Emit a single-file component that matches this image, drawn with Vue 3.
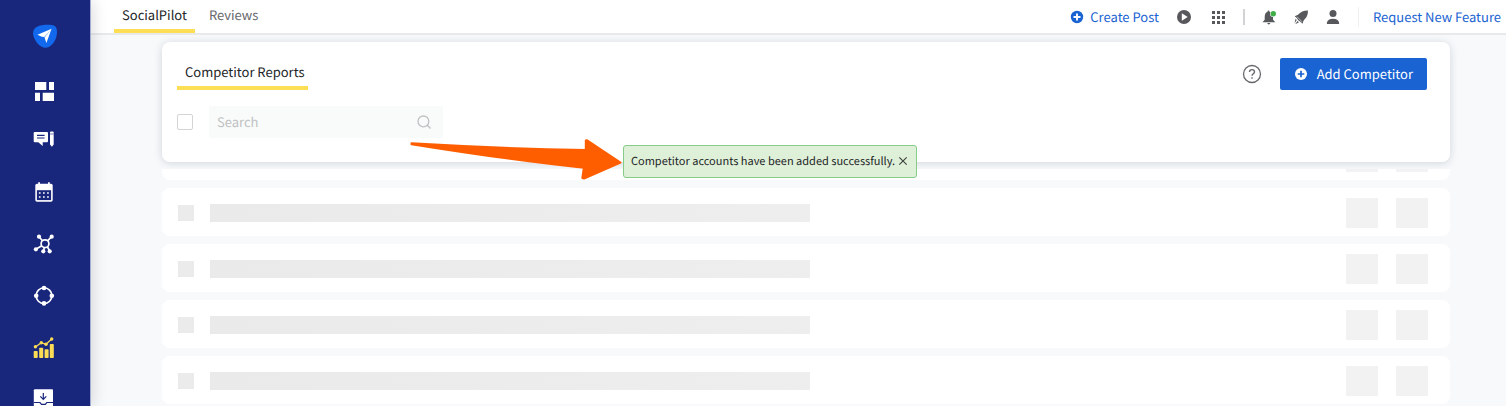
<script setup>
const rows = [1, 2, 3, 4, 5]
</script>

<template>
  <div class="app">
    <aside class="sidebar">
      <a href="#" class="brand" aria-label="Home">
        <svg viewBox="0 0 24 24"><path fill="#1269ed" d="M9 1.200C14 .5 19.800 .6 22 2.300C24.400 4 24.300 9 23.400 12.500C22 18.500 17 23.800 12.500 23.800C7 23.800 1 16.500 .1 10.500C-.3 5 3 1.900 9 1.200Z" /><path fill="#fff" d="M4.500 10.700 18.600 4.800 11.300 13 8.800 12.700ZM18.600 4.800 13.400 19 11.500 13.400Z" /></svg>
      </a>
      <nav class="menu" aria-label="Main">
        <a href="#" class="first" aria-label="Dashboard">
          <svg viewBox="0 0 24 24" fill="#fff"><path d="M2 3h11.300v8H2zM16 3h5v8h-5zM2 13.700h5V22H2zM9.700 13.700H21V22H9.700z" /></svg>
        </a>
        <a href="#" aria-label="Posts">
          <svg viewBox="0 0 24 24"><path fill="#fff" d="M1.700 4H14q1 0 1 1v8.300q0 1-1 1H9.700V18L5.300 14.300H1.700q-1 0-1-1V5q0-1 1-1ZM17 4.500q0-1 1-1h1.700q1 0 1 1v12l-1.800 2.300L17 16.500Z" /><path stroke="#18277c" stroke-width="1.200" d="M4 7.400h7.600M4 10h7.600" /><path stroke="#18277c" stroke-width=".6" d="M17 6h3.700" /></svg>
        </a>
        <a href="#" aria-label="Calendar">
          <svg viewBox="0 0 24 24"><path fill="#fff" d="M4 3.700h1.200V2.200h1.800v1.500h8V2.200h1.800v1.500H18q1.700 0 1.700 1.700V20q0 1.700-1.700 1.700H4Q2.300 21.700 2.300 20V5.400Q2.300 3.700 4 3.700Z" /><path fill="#18277c" d="M3.900 10.200h14.200v9.900H3.900z" /><path stroke="#fff" stroke-width="1.700" stroke-dasharray="1.700 2.400" d="M5.900 13h11M5.900 17h11" /></svg>
        </a>
        <a href="#" aria-label="Accounts">
          <svg viewBox="0 0 24 24" stroke="#fff" fill="none" stroke-width="1.700"><circle cx="12" cy="11.700" r="3.900" /><path d="M6 4.700l3.500 4M18.700 4.700l-4 4M2.700 17.300l6.200-3.600M10.700 19l.5-3.500M16.700 19l-2.200-4" /><g fill="#fff" stroke="none"><circle cx="6" cy="4.700" r="2.100" /><circle cx="18.700" cy="4.700" r="2.100" /><circle cx="2.900" cy="17.300" r="2.100" /><circle cx="10.300" cy="19.300" r="2.100" /><circle cx="16.700" cy="19.300" r="2.100" /></g></svg>
        </a>
        <a href="#" aria-label="Groups">
          <svg viewBox="0 0 24 24" fill="#fff"><circle cx="11" cy="11.700" r="7.900" fill="none" stroke="#fff" stroke-width="1.600" /><circle cx="11" cy="4" r="2.300" /><circle cx="11" cy="19.400" r="2.300" /><circle cx="3.200" cy="11.700" r="2.300" /><circle cx="18.800" cy="11.700" r="2.300" /></svg>
        </a>
        <a href="#" aria-label="Analytics" aria-current="page">
          <svg viewBox="0 0 24 24" fill="#fcdc55"><rect x=".7" y="15" width="4" height="7" rx=".8" /><rect x="6.200" y="11.700" width="4" height="10.300" rx=".8" /><rect x="11.600" y="13.300" width="4" height="8.700" rx=".8" /><rect x="16.800" y="8" width="4" height="14" rx=".8" /><path fill="none" stroke="#fcdc55" stroke-width="1.200" d="M2.400 11 8.300 6.700 13 8.200 18.700 3" /><circle cx="2.400" cy="10.800" r="1.700" /><circle cx="8.300" cy="6.700" r="1.700" /><circle cx="13" cy="8.300" r="1.700" /><circle cx="18.700" cy="3" r="1.700" /></svg>
        </a>
        <a href="#" aria-label="Inbox">
          <svg viewBox="0 0 24 24"><path fill="#fff" d="M2 1.300h17q1 0 1 1V20q0 1-1 1H2q-1.200 0-1.200-1V2.300q0-1 1.200-1Z" /><path fill="none" stroke="#18277c" stroke-width="1.200" d="M10.300 5v6M7.300 8.400l3 3 3-3M.8 14.500h6.200l1.500 1.800h3.800l1.500-1.800H20" /></svg>
        </a>
      </nav>
    </aside>

    <div class="page">
      <header class="topbar">
        <nav class="products" aria-label="Products">
          <a href="#" class="active">SocialPilot</a>
          <a href="#">Reviews</a>
        </nav>
        <div class="tools">
          <a href="#" class="create">
            <svg viewBox="0 0 14 14"><circle cx="7" cy="7" r="6.200" fill="#1a63d2" /><path stroke="#fff" stroke-width="1.900" d="M7 3.500v7M3.500 7h7" /></svg>
            Create Post
          </a>
          <div class="group">
            <button type="button" aria-label="Tutorials"><svg viewBox="0 0 16 16"><circle cx="8" cy="8" r="7" fill="#56585c" /><path fill="#fff" d="M5.800 4.200 11.700 8 5.800 11.800Z" /></svg></button>
            <button type="button" aria-label="Apps"><svg viewBox="0 0 16 16" fill="#56585c"><path d="M2 2h3v3H2zM7 2h3v3H7zM12 2h3v3h-3zM2 7h3v3H2zM7 7h3v3H7zM12 7h3v3h-3zM2 12h3v3H2zM7 12h3v3H7zM12 12h3v3h-3z" /></svg></button>
          </div>
          <div class="group account">
            <button type="button" aria-label="Notifications"><svg viewBox="0 0 16 16"><path fill="#56585c" d="M7.500 1.500q1 0 1 1.200Q12 4 12 8v2.700l2.300 2.600H1.500L3.700 10.700V8Q3.700 3.800 6.500 2.700 6.500 1.500 7.500 1.500ZM6.200 14.100h3.200q-.5 1.300-1.600 1.300t-1.600-1.300Z" /><circle cx="12.200" cy="4.700" r="3.200" fill="#fff" /><circle cx="12.300" cy="4.700" r="2.700" fill="#3fae49" /></svg></button>
            <button type="button" aria-label="What's new"><svg viewBox="0 0 16 16"><path fill="#56585c" d="M14.900 1.400Q15.200 7 11.800 10L10.500 11.700 9.500 14.700 7.500 12.800 5.500 11.500 3.800 9 1.700 7.300 5 5.800Q8.800 1.300 14.900 1.400ZM2.600 9.800l1.200 1.300-2.300 3.200zM4.500 12l1.500 1.300-3.800 2z" /><path stroke="#fff" stroke-width=".6" d="M4 7.700l5 5" /></svg></button>
            <button type="button" aria-label="Profile"><svg viewBox="0 0 16 16" fill="#56585c"><circle cx="8" cy="4.600" r="3.500" /><path d="M1.900 15v-1.200Q2.700 9.700 8 9.700t6.100 4.100V15Z" /></svg></button>
          </div>
          <a href="#" class="request">Request New Feature</a>
        </div>
      </header>

      <main>
        <section class="card">
          <div class="heading">
            <h1>Competitor Reports</h1>
            <div class="actions">
              <button type="button" class="help" aria-label="Help"><svg viewBox="0 0 20 20" fill="none" stroke="#68696d"><circle cx="10" cy="10" r="8.500" stroke-width="1.300" /><path stroke-width="1.400" d="M7.500 8Q7.500 5.600 10 5.600t2.500 2.200q0 1.200-1.300 2T10 11.800M10 13.200v1.600" /></svg></button>
              <button type="button" class="add">
                <svg viewBox="0 0 14 14"><circle cx="7" cy="7" r="6" fill="#fff" /><path stroke="#1a63d2" stroke-width="1.700" d="M7 3.700v6.600M3.700 7h6.600" /></svg>
                Add Competitor
              </button>
            </div>
          </div>
          <div class="filters">
            <input type="checkbox" aria-label="Select all" />
            <label class="search">
              <input type="search" placeholder="Search" aria-label="Search" />
              <svg viewBox="0 0 14 14" fill="none" stroke="#bfc1c2" stroke-width="1.300"><circle cx="6.400" cy="6.400" r="5.400" /><path d="M10.300 10.300 13.500 13.500" /></svg>
            </label>
          </div>
        </section>

        <ul class="list" aria-busy="true">
          <li v-for="row in rows" :key="row">
            <span class="tick"></span>
            <span class="line"></span>
            <span class="box"></span>
            <span class="box"></span>
          </li>
        </ul>
      </main>
    </div>

    <div class="overlay">
      <svg class="arrow" viewBox="0 0 212 42"><path fill="#ff5e00" stroke="#ff5e00" stroke-width="2" stroke-linejoin="round" d="M1.500 4.300Q90 9.500 175.800 11L175.800 1.500Q177 1 179 2.500L210.500 23.500 174 39.500Q171.800 39.500 172.500 38L173.800 28.800Q100 21 1.500 5.200Z" /></svg>
      <div class="toast" role="status">
        <span>Competitor accounts have been added successfully.</span>
        <button type="button" aria-label="Close"><svg viewBox="0 0 10 10" stroke="#3b403b" stroke-width="1.100"><path d="M1.300 1.300l7.400 7.400M8.700 1.300 1.300 8.700" /></svg></button>
      </div>
    </div>
  </div>
</template>

<style>
body { background: #f7f9fb; overflow: hidden; }
</style>

<style scoped>
.app {
  position: relative;
  display: flex;
  height: 100vh;
  overflow: hidden;
  font: 13px/20px "Noto Sans CJK SC", "Noto Sans", sans-serif;
  text-rendering: geometricPrecision;
  color: #222426;
}
.app * { box-sizing: border-box; }
a { color: inherit; text-decoration: none; }
button { font: inherit; text-rendering: inherit; border: 0; padding: 0; background: none; cursor: pointer; }
svg { display: block; flex: none; }
.sidebar {
  position: relative;
  z-index: 2;
  flex: none;
  width: 90px;
  background: #18277c;
  box-shadow: 1px 0 0 #a5acd2, 3px 0 14px rgba(0, 0, 0, .14);
}
.sidebar svg { width: 24px; height: 24px; }
.brand, .menu a { display: flex; align-items: center; justify-content: center; height: 52px; }
.brand { height: 68px; padding-top: 4px; }
.menu .first { height: 46px; }
.page { flex: 1; min-width: 0; }
.topbar {
  display: flex;
  justify-content: space-between;
  height: 35px;
  padding: 0 5px 0 24px;
  background: #fff;
  border-bottom: 2px solid #e8e9eb;
}
.products { display: flex; gap: 6px; }
.products a { height: 33px; padding: 5px 8px 0; color: #66686c; }
.products .active { color: #222426; border-bottom: 4px solid #fdde55; }
.tools { display: flex; align-items: center; height: 33px; gap: 17px; color: #1a63d2; }
.create { display: flex; align-items: center; gap: 6px; }
.create svg, .add svg { width: 14px; height: 14px; }
.group { display: flex; align-items: center; gap: 18px; height: 16px; }
.group svg { width: 16px; height: 16px; }
.account { gap: 16px; padding-left: 16px; border-left: 2px solid #d2d3d5; }
.request { padding-left: 14px; border-left: 1px solid #eff0f1; }
main { padding: 7px 56px 0 72px; }
.card {
  height: 120px;
  padding: 16px 23px 0 15px;
  border-radius: 8px;
  background: #fff;
  box-shadow: 0 1px 8px rgba(30, 40, 60, .17);
}
.heading { display: flex; justify-content: space-between; height: 32px; }
h1 { height: 32px; margin: 0; padding: 4px 4px 0 8px; font: inherit; border-bottom: 4px solid #fdde55; }
.actions { display: flex; align-items: center; gap: 18px; }
.help svg { width: 20px; height: 20px; }
.add {
  display: flex;
  align-items: center;
  gap: 9px;
  height: 32px;
  padding: 0 14px;
  border-radius: 2px;
  background: #1a63d2;
  color: #fff;
}
.filters { display: flex; align-items: center; gap: 16px; margin-top: 16px; }
.filters input[type="checkbox"] {
  appearance: none;
  width: 16px;
  height: 16px;
  margin: 0;
  border: 1px solid #d3d4d5;
  border-radius: 2px;
  background: #fff;
}
.search { display: flex; align-items: center; width: 234px; height: 32px; padding: 0 12px 0 8px; background: #f9fbfb; }
.search input { flex: 1; min-width: 0; padding: 0; border: 0; background: none; font: inherit; text-rendering: inherit; }
.search input::placeholder { color: #bfc1c2; opacity: 1; }
.search svg { width: 14px; height: 14px; }
.list {
  display: flex;
  flex-direction: column;
  gap: 8px;
  margin: 7px 0 0;
  padding: 0;
  overflow: hidden;
  list-style: none;
}
.list li {
  display: flex;
  align-items: center;
  gap: 16px;
  height: 48px;
  padding: 2px 22px 0 16px;
  border-radius: 8px;
  background: #fff;
}
.list li:first-child { margin-top: -37px; }
.tick { width: 16px; height: 16px; background: #ebebeb; }
.line { width: 600px; height: 18px; margin-right: auto; background: linear-gradient(90deg, #eaeaea, #eeeeee); }
.box { width: 32px; height: 30px; background: #f2f2f2; }
.box + .box { margin-left: 2px; }
.overlay { position: absolute; z-index: 3; left: 410px; top: 139px; display: flex; align-items: flex-start; gap: 1px; }
.arrow { width: 212px; height: 42px; }
.toast {
  display: flex;
  align-items: center;
  gap: 3px;
  height: 33px;
  margin-top: 6px;
  padding: 0 8px 2px 7px;
  border: 1px solid #84cc88;
  border-radius: 3px;
  background: #dff0d8;
  font-size: 11px;
  white-space: nowrap;
}
.toast svg { width: 10px; height: 10px; }
</style>
